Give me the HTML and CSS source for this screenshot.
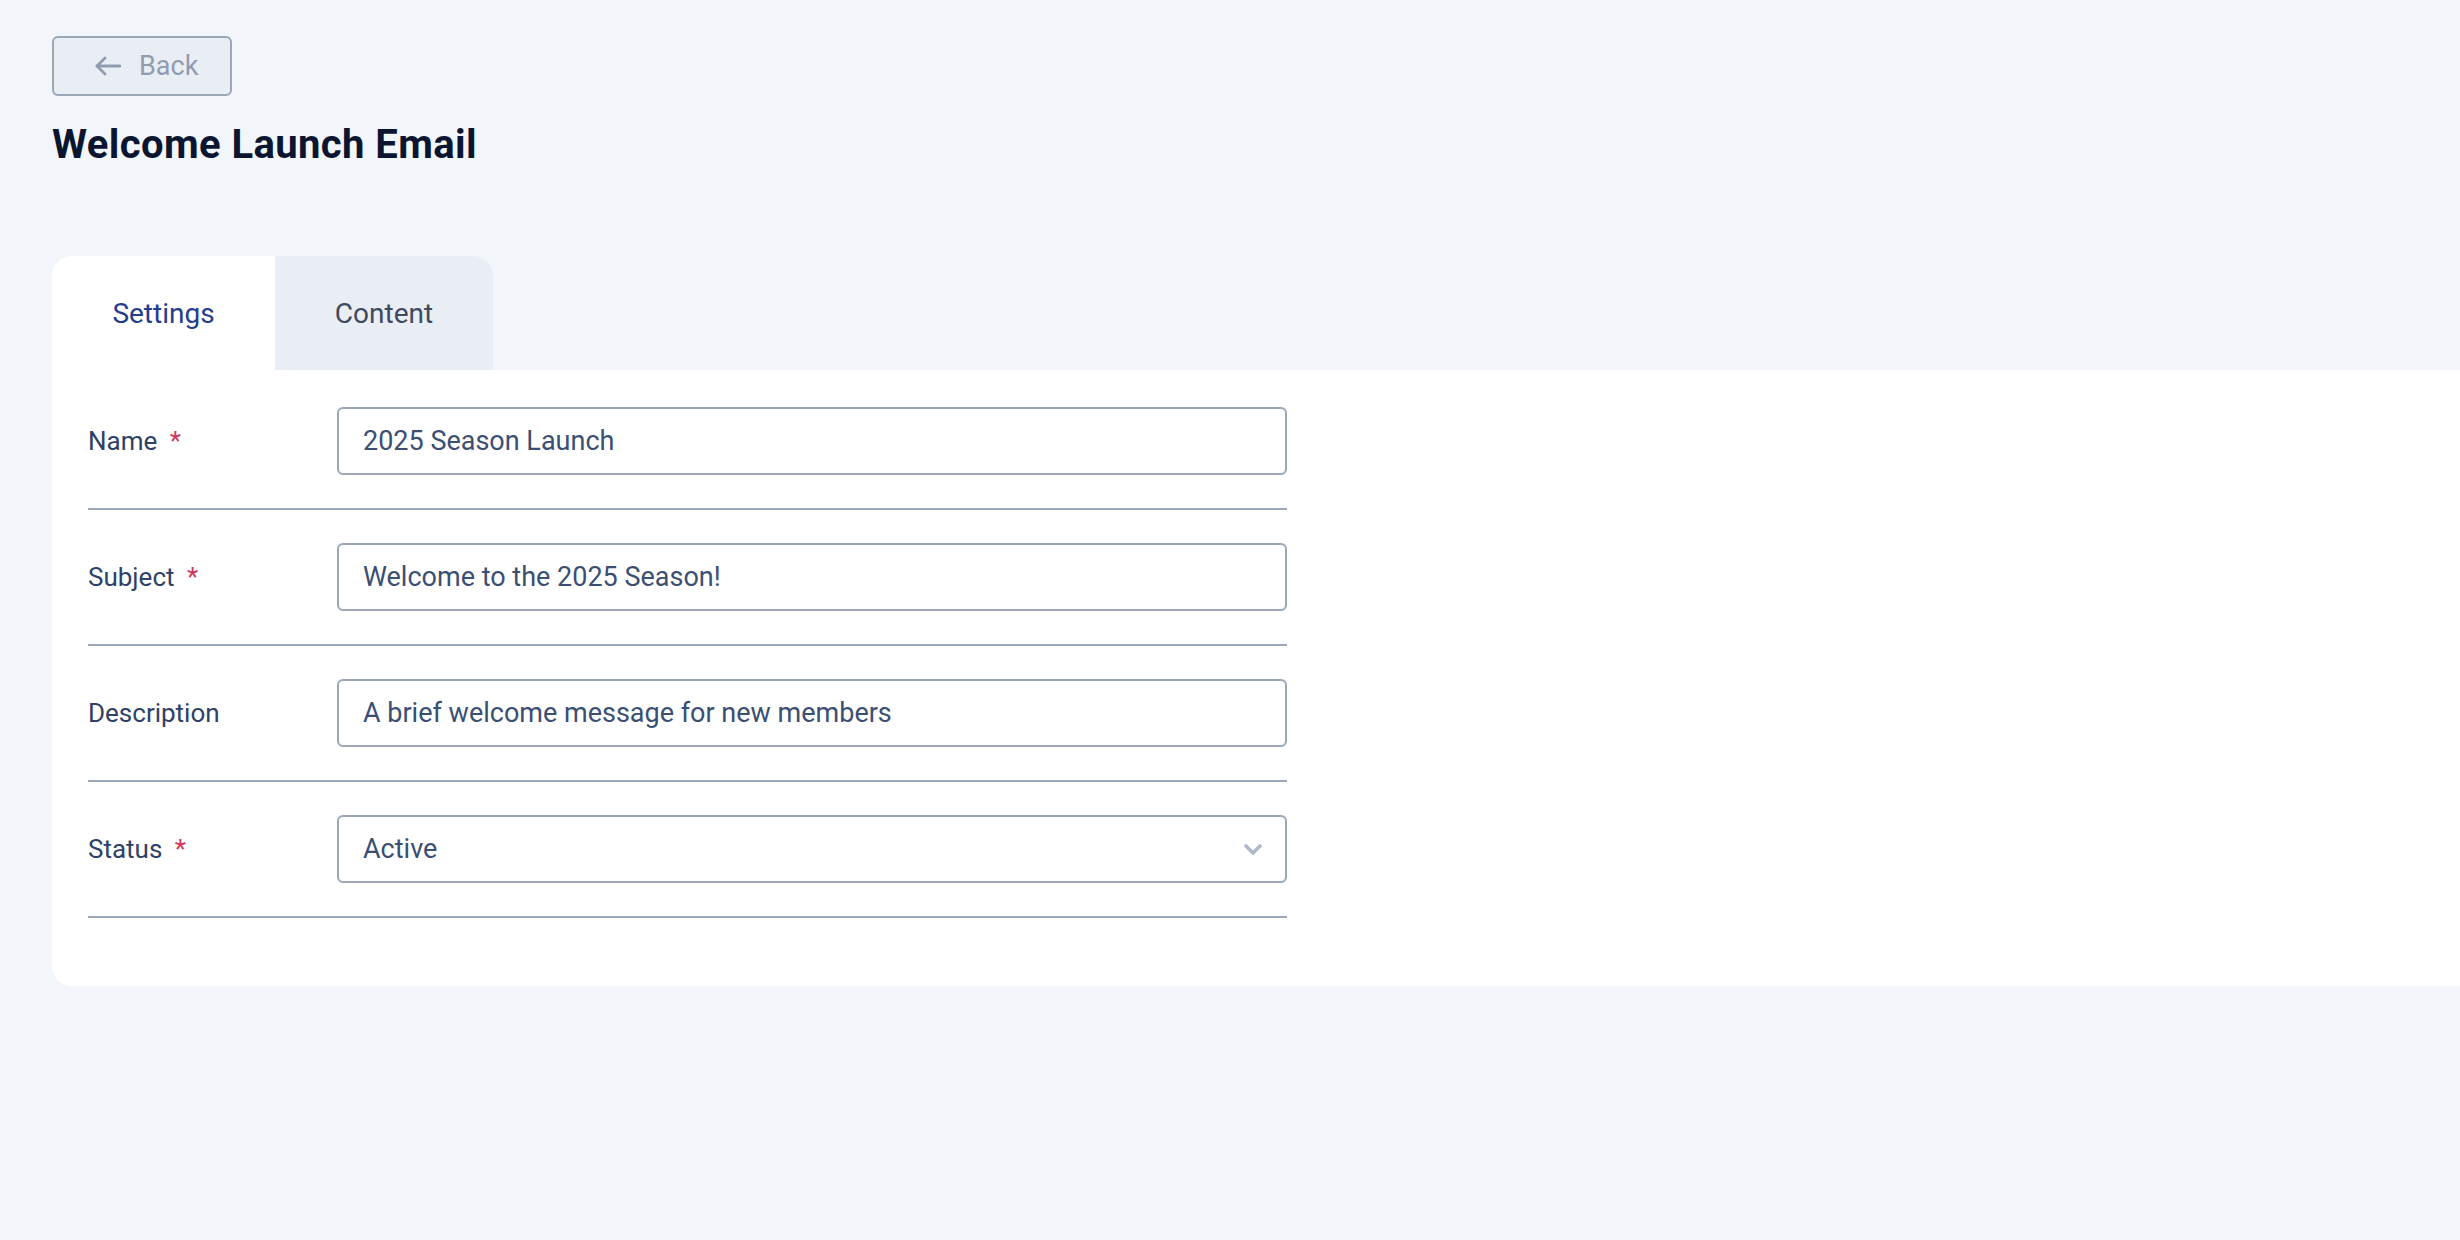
FILE: index.html
```html
<!DOCTYPE html>
<html lang="en">
<head>
<meta charset="utf-8">
<title>Welcome Launch Email</title>
<link rel="stylesheet" href="styles.css">
</head>
<body>
<div class="page">
  <button class="back-btn" type="button">
    <svg class="back-icon" width="26" height="20" viewBox="0 0 26 20" fill="none" stroke="currentColor" stroke-width="2.8" stroke-linecap="round" stroke-linejoin="round"><path d="M25 10H2"/><path d="M10 2L2 10l8 8"/></svg>
    <span>Back</span>
  </button>
  <h1 class="title">Welcome Launch Email</h1>

  <div class="tabs">
    <div class="tab tab-active">Settings</div>
    <div class="tab">Content</div>
  </div>
  <div class="card">
    <div class="form">
      <div class="row">
        <label class="label">Name <span class="req">*</span></label>
        <div class="field">2025 Season Launch</div>
      </div>
      <div class="row">
        <label class="label">Subject <span class="req">*</span></label>
        <div class="field">Welcome to the 2025 Season!</div>
      </div>
      <div class="row">
        <label class="label">Description</label>
        <div class="field">A brief welcome message for new members</div>
      </div>
      <div class="row">
        <label class="label">Status <span class="req">*</span></label>
        <div class="field field-select">
          <span>Active</span>
          <svg class="chev" width="20" height="13" viewBox="0 0 20 13" fill="none" stroke="currentColor" stroke-width="3.6" stroke-linecap="round" stroke-linejoin="round"><path d="M3 3l7 7 7-7"/></svg>
        </div>
      </div>
    </div>
  </div>
</div>
</body>
</html>
```
FILE: styles.css
```css
html, body {
  margin: 0;
  padding: 0;
  background: #f2f5fa;
}
body {
  font-family: Roboto, "Liberation Sans", Arial, sans-serif;
  color: #2e4166;
}
.page {
  padding: 36px 0 0 52px;
}
.back-btn {
  display: flex;
  align-items: center;
  gap: 18px;
  width: 180px;
  height: 60px;
  box-sizing: border-box;
  padding: 0 0 0 41px;
  background: #e9eef5;
  border: 2px solid #9aa7b7;
  border-radius: 6px;
  color: #8f9caf;
  font-family: inherit;
  font-size: 27px;
  cursor: pointer;
}
.back-icon {
  display: block;
}
.title {
  margin: 25px 0 0;
  font-size: 40px;
  line-height: 48px;
  font-weight: 700;
  color: #0c1530;
  letter-spacing: 0.4px;
}
.tabs {
  display: flex;
  margin-top: 87px;
}
.tab {
  height: 114px;
  display: flex;
  align-items: center;
  justify-content: center;
  font-size: 28px;
  color: #3f4a5e;
  background: #e9eef5;
  width: 218px;
  border-radius: 0 20px 0 0;
}
.tab-active {
  width: 223px;
  background: #ffffff;
  color: #253d8d;
  border-radius: 20px 0 0 0;
}
.card {
  background: #ffffff;
  border-radius: 0 0 0 20px;
  padding: 4px 0 68px 36px;
}
.form {
  width: 1199px;
}
.row {
  display: flex;
  align-items: center;
  padding: 33px 0;
  border-bottom: 2px solid #9aa7b6;
}
.label {
  width: 249px;
  flex: none;
  font-size: 26px;
  color: #2e4166;
}
.req {
  color: #d1335a;
  margin-left: 6px;
}
.field {
  flex: 1;
  height: 68px;
  box-sizing: border-box;
  border: 2px solid #9aa7b7;
  border-radius: 6px;
  display: flex;
  align-items: center;
  padding: 0 24px;
  font-size: 27px;
  color: #3b4f73;
}
.field-select {
  justify-content: space-between;
  padding-right: 22px;
}
.chev {
  color: #afb9cc;
  display: block;
}
```
